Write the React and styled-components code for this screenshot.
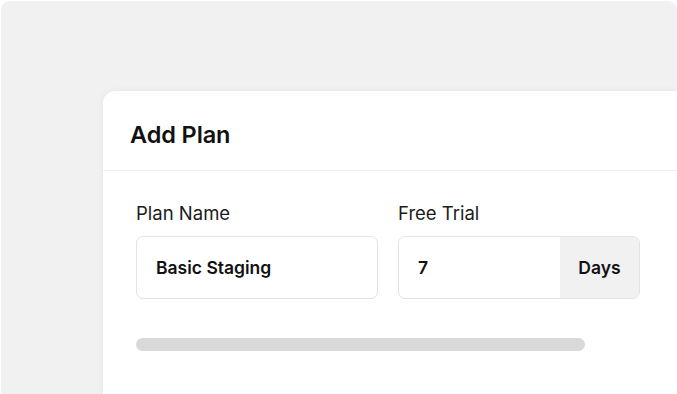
import React from "react";
import styled, { createGlobalStyle } from "styled-components";

const Global = createGlobalStyle`
  html, body { margin: 0; padding: 0; background: #ffffff; }
  body { font-family: Inter, "Noto Sans", sans-serif; color: #111; overflow: hidden; }
`;

const Page = styled.div`
  width: 677px;
  height: 394px;
  overflow: hidden;
  padding: 1px 0 0 1px;
  box-sizing: border-box;
`;

const Frame = styled.div`
  height: 100%;
  background: #f1f1f1;
  border-radius: 9px 9px 0 0;
  padding: 90px 0 0 102px;
  box-sizing: border-box;
  display: flex;
`;

const Card = styled.div`
  flex: 1;
  background: #fff;
  border-radius: 12px 0 0 0;
  box-shadow: 0 0 6px rgba(0, 0, 0, 0.06);
  display: flex;
  flex-direction: column;
`;

const Header = styled.div`
  height: 80px;
  box-sizing: border-box;
  padding: 7px 0 0 27px;
  display: flex;
  align-items: center;
  border-bottom: 1px solid #efefef;
`;

const Title = styled.h1`
  margin: 0;
  font-size: 23.5px;
  font-weight: 600;
  letter-spacing: -0.1px;
  color: #111;
`;

const Body = styled.div`
  padding: 31px 0 0 33px;
  display: flex;
  flex-direction: column;
`;

const Fields = styled.div`
  display: flex;
  gap: 20px;
`;

const Field = styled.div`
  display: flex;
  flex-direction: column;
  width: ${(p) => p.$width}px;
`;

const Label = styled.label`
  font-size: 18.5px;
  line-height: 22px;
  font-weight: 400;
  color: #1a1a1a;
  margin-bottom: 12px;
`;

const Box = styled.div`
  height: 63px;
  box-sizing: border-box;
  border: 1px solid #e3e3e3;
  border-radius: 7px;
  display: flex;
  align-items: stretch;
  overflow: hidden;
`;

const Value = styled.div`
  flex: 1;
  display: flex;
  align-items: center;
  padding-left: 19px;
  font-size: 17.5px;
  font-weight: 600;
  color: #111;
`;

const Suffix = styled.div`
  width: 79px;
  background: #f1f1f1;
  display: flex;
  align-items: center;
  justify-content: center;
  font-size: 17.5px;
  font-weight: 600;
  color: #111;
`;

const Bar = styled.div`
  margin-top: 39px;
  width: 449px;
  height: 13px;
  border-radius: 7px;
  background: #d9d9d9;
`;

export default function App() {
  return (
    <>
      <Global />
      <Page>
        <Frame>
          <Card>
            <Header>
              <Title>Add Plan</Title>
            </Header>
            <Body>
              <Fields>
                <Field $width={242}>
                  <Label>Plan Name</Label>
                  <Box>
                    <Value>Basic Staging</Value>
                  </Box>
                </Field>
                <Field $width={242}>
                  <Label>Free Trial</Label>
                  <Box>
                    <Value>7</Value>
                    <Suffix>Days</Suffix>
                  </Box>
                </Field>
              </Fields>
              <Bar />
            </Body>
          </Card>
        </Frame>
      </Page>
    </>
  );
}
